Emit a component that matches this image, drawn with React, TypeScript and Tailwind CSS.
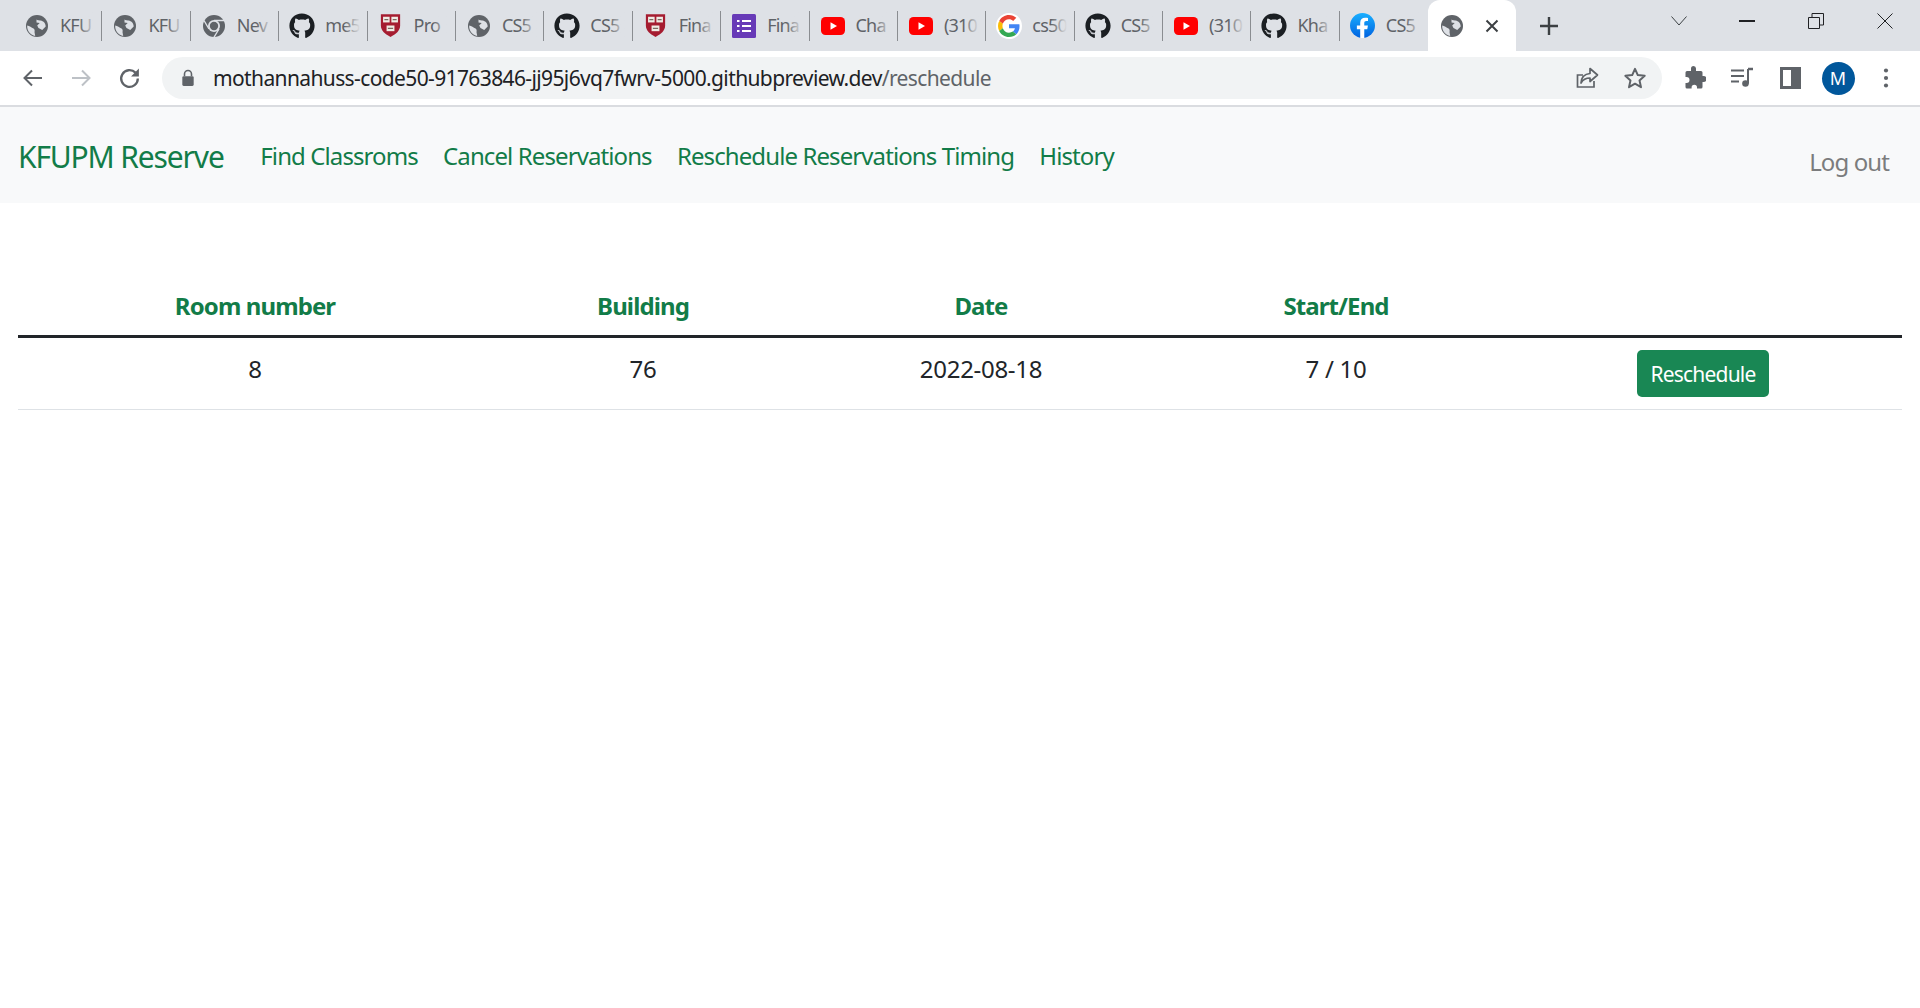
import React from "react";
import { FaGithub } from "react-icons/fa";

const UI = "font-['Noto_Sans','Open_Sans',sans-serif]";

const Globe = () => (
  <svg viewBox="0 0 24 24" className="w-[24px] h-[24px]">
    <circle cx="12" cy="12" r="11" fill="#5f6368" />
    <path d="M11.500 5.500c2 1.500 4.500 .2 7 2.300 1.500 1.200 2.200 3 2.200 4.700l-3.500 3.500-3.700-2-1.300-2.500 2.500-2.500-3.200-.6z" fill="#dee1e6" />
    <path d="M2.200 11.500c2.300 .3 4.300 2 6.300 3 1 .5 1.500 2 1 3.500l.7 4c-4.500-.7-8.500-5-8-10.500z" fill="#dee1e6" />
  </svg>
);

const Chromium = () => (
  <svg viewBox="0 0 24 24" className="w-[24px] h-[24px]">
    <circle cx="12" cy="12" r="11" fill="#5f6368" />
    <circle cx="12" cy="12" r="6" fill="#dee1e6" />
    <circle cx="12" cy="12" r="4.200" fill="#5f6368" />
    <path d="M12 6.500h10.500M7 15l-5-8.500M17 15l-5.500 9" stroke="#dee1e6" strokeWidth="1.400" />
  </svg>
);

const Github = () => <FaGithub className="w-[26px] h-[26px] text-[#1b1f23]" />;

const Shield = () => (
  <svg viewBox="0 0 24 28" className="w-[21px] h-[25px]">
    <path d="M1 1h22v13c0 6-5 10-11 13C6 24 1 20 1 14z" fill="#a51c30" />
    <rect x="3.500" y="4" width="7.500" height="6.500" fill="#f0ebe4" />
    <rect x="13" y="4" width="7.500" height="6.500" fill="#f0ebe4" />
    <rect x="7.500" y="14" width="9" height="6.500" fill="#f0ebe4" />
    <path d="M5 7.200h4.500M14.500 7.200h4.500M9 17.200h6" stroke="#7a6a60" strokeWidth="1.400" />
  </svg>
);

const Forms = () => (
  <svg viewBox="0 0 24 24" className="w-[24px] h-[24px]">
    <rect width="24" height="24" rx="1.500" fill="#673ab7" />
    <path d="M10 7h9M10 12h9M10 17h9" stroke="#fff" strokeWidth="2.200" />
    <path d="M5 7h2.500M5 12h2.500M5 17h2.500" stroke="#fff" strokeWidth="2.200" />
  </svg>
);

const Youtube = () => (
  <svg viewBox="0 0 24 18" className="w-[24px] h-[18px]">
    <rect width="24" height="18" rx="4.500" fill="#ff0000" />
    <path d="M9.500 5.200l6.500 3.800-6.500 3.800z" fill="#fff" />
  </svg>
);

const Google = () => (
  <span className="w-[26px] h-[26px] rounded-full bg-white flex items-center justify-center">
    <svg viewBox="0 0 48 48" className="w-[22px] h-[22px]">
      <path fill="#EA4335" d="M24 9.500c3.500 0 6.700 1.300 9.100 3.500l6.800-6.800C35.800 2.400 30.200 0 24 0 14.600 0 6.500 5.400 2.600 13.200l7.900 6.100C12.400 13.700 17.700 9.500 24 9.500z" />
      <path fill="#4285F4" d="M47 24.500c0-1.600-.1-3.100-.4-4.500H24v9h12.900c-.6 3-2.200 5.500-4.700 7.200l7.700 6C44.400 37.900 47 31.800 47 24.500z" />
      <path fill="#FBBC05" d="M10.500 28.700c-.5-1.500-.8-3-.8-4.700s.3-3.200.8-4.700l-7.900-6.100C.9 16.500 0 20.100 0 24s.9 7.500 2.600 10.800z" />
      <path fill="#34A853" d="M24 48c6.500 0 11.900-2.100 15.900-5.800l-7.700-6c-2.200 1.400-4.900 2.300-8.200 2.300-6.300 0-11.600-4.200-13.500-9.800l-7.900 6.100C6.500 42.600 14.600 48 24 48z" />
    </svg>
  </span>
);

const Facebook = () => (
  <svg viewBox="0 0 24 24" className="w-[25px] h-[25px]">
    <defs>
      <linearGradient id="fb" x1="0" y1="0" x2="0" y2="1">
        <stop offset="0" stopColor="#19afff" />
        <stop offset="1" stopColor="#0062e0" />
      </linearGradient>
    </defs>
    <circle cx="12" cy="12" r="12" fill="url(#fb)" />
    <path d="M16.600 15.500l.6-3.500h-3.500V9.600c0-1 .5-1.900 2-1.900h1.600V4.700s-1.400-.2-2.800-.2c-2.800 0-4.700 1.700-4.700 4.800V12H6.600v3.500h3.200V24h3.900v-8.500z" fill="#fff" />
  </svg>
);

const tabs: { icon: React.ReactNode; title: string }[] = [
  { icon: <Globe />, title: "KFU" },
  { icon: <Globe />, title: "KFU" },
  { icon: <Chromium />, title: "Nev" },
  { icon: <Github />, title: "me5" },
  { icon: <Shield />, title: "Pro" },
  { icon: <Globe />, title: "CS5" },
  { icon: <Github />, title: "CS5" },
  { icon: <Shield />, title: "Fina" },
  { icon: <Forms />, title: "Fina" },
  { icon: <Youtube />, title: "Cha" },
  { icon: <Youtube />, title: "(310" },
  { icon: <Google />, title: "cs50" },
  { icon: <Github />, title: "CS5" },
  { icon: <Youtube />, title: "(310" },
  { icon: <Github />, title: "Kha" },
  { icon: <Facebook />, title: "CS5" },
];

const Tab = ({ icon, title, last }: { icon: React.ReactNode; title: string; last: boolean }) => (
  <div className="w-[88.4px] h-[51px] shrink-0 flex items-center relative">
    <span className="w-[46px] shrink-0 flex justify-center">{icon}</span>
    <span className="w-[35px] overflow-hidden whitespace-nowrap text-[18px] tracking-[-0.8px] text-[#5f6368] relative">
      {title}
      <span className="absolute right-0 top-0 bottom-0 w-[16px] bg-gradient-to-r from-transparent to-[#dee1e6]" />
    </span>
    {!last && <span className="absolute right-0 top-[11px] h-[30px] w-[1px] bg-[#8a8d91]" />}
  </div>
);

const Slot = ({ w, children }: { w: string; children: React.ReactNode }) => (
  <span className={`${w} shrink-0 flex items-center justify-center`}>{children}</span>
);

const gridCols = "grid grid-cols-[474px_302px_374px_336px_398px]";
const green = "text-[#127c48]";

export default function App() {
  return (
    <div className={`${UI} min-h-screen bg-white`}>
      {/* tab strip */}
      <div className="h-[51px] bg-[#dee1e6] flex pl-[14px] overflow-hidden">
        {tabs.map((t, i) => (
          <Tab key={i} icon={t.icon} title={t.title} last={i === tabs.length - 1} />
        ))}
        <div className="w-[88px] shrink-0 h-[51px] bg-white rounded-t-[12px] flex items-center ml-[-0.4px]">
          <span className="w-[48px] flex justify-center">
            <Globe />
          </span>
          <svg viewBox="0 0 16 16" className="w-[16px] h-[16px] ml-[8px]">
            <path d="M2.500 2.500l11 11M13.500 2.500l-11 11" stroke="#3c4043" strokeWidth="2" />
          </svg>
        </div>
        <span className="w-[66px] h-[51px] flex items-center justify-center shrink-0">
          <svg viewBox="0 0 20 20" className="w-[20px] h-[20px]">
            <path d="M10 1v18M1 10h18" stroke="#3c4043" strokeWidth="2.400" />
          </svg>
        </span>
        <div className="ml-[63px] flex items-start pt-[11px] text-[#3c4043]">
          <Slot w="w-[68px] h-[20px]">
            <svg viewBox="0 0 16 10" className="w-[16px] h-[10px]">
              <path d="M.5.500l7.500 8.500 7.500-8.500" fill="none" stroke="#3c4043" strokeWidth="1" />
            </svg>
          </Slot>
          <Slot w="w-[69px] h-[20px]">
            <span className="w-[16px] h-[1.500px] bg-[#202124]" />
          </Slot>
          <Slot w="w-[69px] h-[20px]">
            <svg viewBox="0 0 16 16" className="w-[16px] h-[16px]">
              <path d="M.5 4.500h11v11H.5zM4 4.500V.5h11.500V12h-4" fill="none" stroke="#202124" strokeWidth="1" />
            </svg>
          </Slot>
          <Slot w="w-[68px] h-[20px]">
            <svg viewBox="0 0 16 16" className="w-[16px] h-[16px]">
              <path d="M.5.500l15 15M15.500.5l-15 15" stroke="#202124" strokeWidth="1" />
            </svg>
          </Slot>
        </div>
      </div>

      {/* toolbar */}
      <div className="h-[56px] bg-white border-b-[2px] border-[#dadce0] flex items-start pt-[6px]">
        <div className="flex items-center h-[42px] pl-[9px] w-[162px]">
          <Slot w="w-[48px]">
            <svg viewBox="0 0 24 24" className="w-[24px] h-[24px]">
              <path d="M21 12H4M11 4.500L3.500 12l7.500 7.500" fill="none" stroke="#5f6368" strokeWidth="2" />
            </svg>
          </Slot>
          <Slot w="w-[48px]">
            <svg viewBox="0 0 24 24" className="w-[24px] h-[24px]">
              <path d="M3 12h17M13 4.500l7.500 7.500-7.500 7.500" fill="none" stroke="#bdc1c6" strokeWidth="2" />
            </svg>
          </Slot>
          <Slot w="w-[49px]">
            <svg viewBox="0 0 24 24" className="w-[25px] h-[25px]">
              <path d="M20 12a8 8 0 1 1-2.300-5.600" fill="none" stroke="#5f6368" strokeWidth="2.200" />
              <path d="M21 2.500v7.500h-7.500z" fill="#5f6368" />
            </svg>
          </Slot>
        </div>
        <div className="w-[1500px] h-[42px] rounded-full bg-[#f1f3f4] flex items-center">
          <span className="w-[51px] flex justify-center">
            <svg viewBox="0 0 16 20" className="w-[14px] h-[18px]">
              <path d="M4 8V5.500a4 4 0 0 1 8 0V8" fill="none" stroke="#5f6368" strokeWidth="1.800" />
              <rect x="1.500" y="8" width="13" height="11" rx="1.500" fill="#5f6368" />
            </svg>
          </span>
          <span className="text-[21px] tracking-[-0.62px] text-[#202124] whitespace-nowrap pt-[2px]">
            mothannahuss-code50-91763846-jj95j6vq7fwrv-5000.githubpreview.dev
            <span className="text-[#5f6368]">/reschedule</span>
          </span>
          <span className="ml-auto flex items-center pr-[3px]">
            <Slot w="w-[48px]">
              <svg viewBox="0 0 24 24" className="w-[24px] h-[24px]">
                <path d="M19 15v6H2.500V9H8" fill="none" stroke="#5f6368" strokeWidth="1.700" />
                <path d="M15 2.500l7.500 6.500-7.500 6.500V12c-4.500 0-7 1.500-9 5 .3-5 3-9 9-9.500z" fill="none" stroke="#5f6368" strokeWidth="1.700" strokeLinejoin="round" />
              </svg>
            </Slot>
            <Slot w="w-[48px]">
              <svg viewBox="0 0 24 24" className="w-[24px] h-[24px]">
                <path d="M12 2.800l2.800 6.300 6.900.7-5.200 4.600 1.500 6.800-6-3.500-6 3.500 1.500-6.800-5.200-4.600 6.900-.7z" fill="none" stroke="#5f6368" strokeWidth="2" strokeLinejoin="round" />
              </svg>
            </Slot>
          </span>
        </div>
        <div className="flex items-center h-[42px] pl-[8px]">
          <Slot w="w-[48px]">
            <svg viewBox="0 0 24 24" className="w-[24px] h-[24px]">
              <path d="M9 2.500a2.500 2.500 0 0 1 5 0V5h5a1.500 1.500 0 0 1 1.500 1.500V10h1a3 3 0 0 1 0 6h-1v5a1.500 1.500 0 0 1-1.500 1.500h-4v-1a2.700 2.700 0 0 0-5.400 0v1H5A1.500 1.500 0 0 1 3.500 21v-4h1a3 3 0 0 0 0-6h-1V6.500A1.500 1.500 0 0 1 5 5h4z" fill="#5f6368" />
            </svg>
          </Slot>
          <Slot w="w-[48px]">
            <svg viewBox="0 0 24 24" className="w-[24px] h-[24px]">
              <path d="M1 4.500h13M1 10h13M1 15.500h8" stroke="#5f6368" strokeWidth="2" />
              <path d="M18 3v14.500" stroke="#5f6368" strokeWidth="2" />
              <path d="M18 3h5" stroke="#5f6368" strokeWidth="2.500" />
              <circle cx="15.500" cy="17.500" r="3.300" fill="#5f6368" />
            </svg>
          </Slot>
          <Slot w="w-[48px]">
            <span className="w-[21px] h-[22px] border-[3px] border-r-[10px] border-[#5f6368] bg-white" />
          </Slot>
          <Slot w="w-[48px]">
            <span className="w-[33px] h-[33px] rounded-full bg-[#01579b] text-white text-[18px] flex items-center justify-center">M</span>
          </Slot>
          <Slot w="w-[48px]">
            <svg viewBox="0 0 6 24" className="w-[6px] h-[20px]">
              <circle cx="3" cy="3" r="2.500" fill="#5f6368" />
              <circle cx="3" cy="12" r="2.500" fill="#5f6368" />
              <circle cx="3" cy="21" r="2.500" fill="#5f6368" />
            </svg>
          </Slot>
        </div>
      </div>

      {/* navbar */}
      <nav className="h-[96px] bg-[#f8f9fa] flex items-start pl-[18px] pr-[31px] text-[24px] tracking-[-0.9px]">
        <a className={`text-[30px] leading-[40px] mt-[30px] ${green} tracking-[-1.15px] mr-[24px]`}>KFUPM Reserve</a>
        <div className={`flex mt-[32px] leading-[34px] ${green}`}>
          <a className="px-[12.6px]">Find Classroms</a>
          <a className="px-[12.6px]">Cancel Reservations</a>
          <a className="px-[12.6px]">Reschedule Reservations Timing</a>
          <a className="px-[12.6px]">History</a>
        </div>
        <a className="ml-auto mt-[38px] leading-[34px] text-[#7b7c7d]">Log out</a>
      </nav>

      {/* table */}
      <div className="pt-[87px] px-[18px] text-[24px] text-center">
        <div className={`${gridCols} h-[45px] border-b-[3px] border-[#212529] box-content font-bold ${green} leading-[32px] tracking-[-0.9px]`}>
          <span>Room number</span>
          <span>Building</span>
          <span>Date</span>
          <span>Start/End</span>
          <span />
        </div>
        <div className={`${gridCols} h-[72px] border-b border-[#dee2e6] text-[#212529] tracking-[-0.3px]`}>
          <span className="leading-[32px] pt-[15px]">8</span>
          <span className="leading-[32px] pt-[15px]">76</span>
          <span className="leading-[32px] pt-[15px]">2022-08-18</span>
          <span className="leading-[32px] pt-[15px]">7 / 10</span>
          <span className="flex justify-center pt-[12px]">
            <button className="w-[132px] h-[47px] rounded-[5px] bg-[#198754] text-white text-[21px] tracking-[-0.8px] pt-[2px]">Reschedule</button>
          </span>
        </div>
      </div>
    </div>
  );
}
